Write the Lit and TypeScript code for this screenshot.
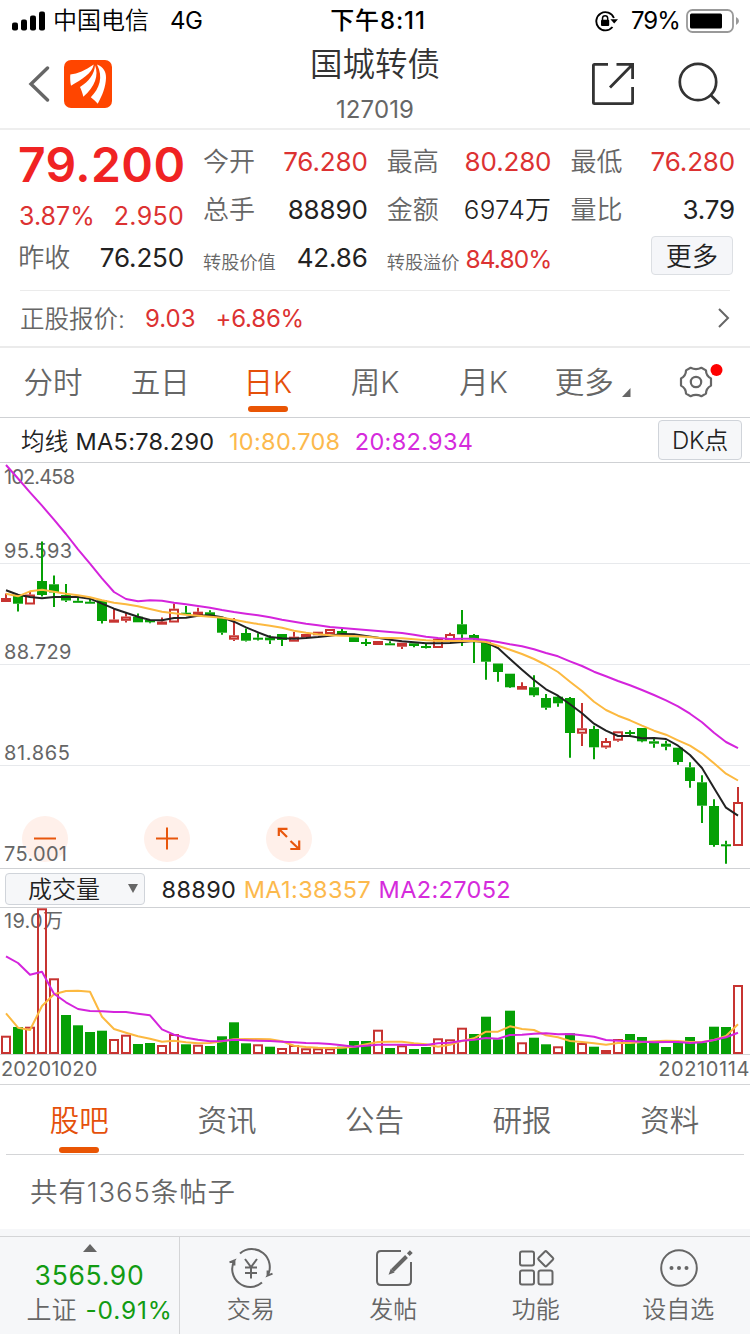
import { LitElement, html, svg, css } from "lit";
import { customElement } from "lit/decorators.js";
import { classMap } from "lit/directives/class-map.js";

const STEP = 12;
const cx = (i: number) => 6 + STEP * i;

// [rising, high, body top, body bottom, low]
type Candle = [number, number, number, number, number];
const CANDLES: Candle[] = [
  [1, 593.5, 598, 602, 602], [0, 594, 594.5, 603.7, 611.5], [1, 591.5, 594.5, 604.5, 604.5],
  [0, 541.5, 581, 595, 596.5], [0, 575.5, 584.3, 592.5, 607], [0, 584, 595, 600.5, 602],
  [0, 596.5, 600.8, 602.8, 602.8], [0, 598.7, 601.7, 603.7, 603.7], [0, 600.3, 600.3, 621, 623.5],
  [1, 609, 619.5, 622.7, 622.7], [1, 612.5, 616.5, 620.8, 622.5], [0, 613.5, 616.7, 622.3, 622.3],
  [0, 620, 620, 622.3, 623.3], [1, 617.5, 621.5, 624.7, 624.7], [1, 603.5, 608.7, 622.5, 622.5],
  [0, 606, 612.7, 614.3, 614.3], [1, 607.7, 611.7, 615.3, 615.3], [0, 610.3, 612.3, 615.3, 615.3],
  [0, 618, 618, 632.7, 634.7], [1, 618, 635.3, 639.7, 641], [0, 628.5, 633, 640.7, 641.5],
  [0, 633.3, 637.7, 639.3, 640.5], [0, 635.3, 637.5, 640.3, 644], [0, 634, 634, 640, 646],
  [1, 632, 636.7, 641.7, 641.7], [1, 634, 634, 637.5, 637.5], [1, 631.7, 631.7, 635.3, 635.3],
  [1, 629, 629, 634, 634], [0, 629, 631, 635.3, 635.3], [0, 637.3, 637.3, 642, 642],
  [0, 638.7, 642, 643.5, 646], [1, 641, 641, 645, 645], [0, 641.3, 643.3, 645, 645],
  [1, 642.7, 642.7, 646.7, 649], [0, 643.3, 643.3, 646, 647.3], [0, 644, 646, 647.7, 648.5],
  [1, 638.7, 638.7, 648, 648], [1, 632.7, 634, 640, 640], [0, 610, 624.3, 634.3, 646],
  [0, 634, 635, 639.3, 663], [0, 641.7, 641.7, 661.7, 679.7], [0, 663.5, 663.5, 672, 681.7],
  [0, 673.7, 673.7, 687.3, 688], [1, 682.3, 686, 689.7, 689.7], [0, 675.3, 687.3, 695.3, 696.7],
  [0, 694, 698, 707.7, 709.7], [0, 695, 696.7, 703.3, 706.7], [0, 697, 698, 733, 757.7],
  [1, 703, 728.3, 733.7, 746], [0, 725.7, 729, 747.3, 759.3], [1, 738, 741, 747.5, 748.7],
  [1, 731.3, 731.3, 740.7, 741.7], [0, 730.3, 732, 733.5, 735.7], [0, 728, 728, 741.3, 742.3],
  [0, 738.7, 741.3, 743.7, 747.7], [0, 740.7, 743.7, 746.7, 750.3], [0, 747.7, 747.7, 762, 764.7],
  [0, 762.3, 767.3, 781, 787.7], [0, 775.3, 782.3, 805.7, 823], [0, 799.3, 806, 845, 846.7],
  [0, 840.7, 844.3, 846, 863.7], [1, 787, 802, 846, 846],
];

const MA5 = [
  590.3, 594.7, 597, 598.3, 597, 597, 597, 598.7, 603.7, 608.7, 612.7, 616.7, 620, 620.3, 618, 617.7,
  615.7, 615.3, 617.3, 621.7, 627.3, 632.3, 637, 638.3, 638.7, 638, 637, 635.7, 634, 634.3, 636,
  637.7, 639.7, 641.3, 642.3, 643.3, 643.3, 643, 642, 641, 642.3, 648, 659, 669.7, 680, 689.3,
  695.7, 704.3, 713.3, 723.7, 730.7, 736, 736, 738.3, 738, 739, 745.7, 755, 768, 788, 807.7, 815.7,
];
const MA10 = [
  593.7, 596.3, 591.3, 589.7, 591.7, 593.7, 595.3, 597.3, 600.3, 602.7, 604.3, 606.3, 609, 611.7,
  613.3, 614.7, 615.7, 616.7, 617.7, 619.7, 622, 624, 625.7, 627.7, 630.7, 632.7, 634.3, 635.3,
  635.7, 636, 636.7, 637.7, 638, 638.3, 639.3, 640.3, 641, 641, 641, 641, 642, 645.7, 649.7, 654,
  659, 665, 672, 681.7, 691, 701.7, 710, 715.7, 720.3, 725.7, 730.7, 734.7, 740.3, 745.7, 753.3,
  763.3, 773.7, 780.5,
];
const MA20 = [
  465, 478.5, 492.3, 505.7, 519.7, 534, 549.3, 563.7, 578.3, 592, 599, 601.3, 600.3, 600.7, 602.7,
  604.3, 606, 607.7, 610, 612, 613.7, 615.3, 617.3, 619.7, 621.7, 623.7, 625.3, 627, 628, 629, 630,
  631, 632, 633, 634.7, 636.7, 638, 639, 638.7, 638.7, 640, 642, 644.3, 646.3, 649.3, 653, 656.3,
  661.3, 666, 671.7, 676.3, 681, 685.3, 690, 695, 700.3, 706.3, 713.7, 722.3, 732.7, 742, 748.2,
];

// [rising, bar top]
const VOLUMES: [number, number][] = [
  [1, 1035.7], [0, 1027], [1, 1026.7], [1, 908.3], [1, 978.3], [0, 1015], [0, 1025.3], [0, 1032],
  [0, 1030.7], [1, 1039], [1, 1034.7], [0, 1044], [0, 1043], [1, 1045], [1, 1034], [0, 1044.3],
  [1, 1044.7], [0, 1046], [0, 1036.3], [0, 1022.3], [0, 1043.3], [1, 1044.3], [0, 1046.7],
  [1, 1048], [1, 1045], [1, 1048.3], [1, 1048.3], [1, 1048.3], [0, 1046.7], [0, 1041], [0, 1041],
  [1, 1029.7], [0, 1048], [1, 1045.3], [0, 1049], [0, 1047], [1, 1038.3], [1, 1039.3], [1, 1027.7],
  [0, 1034], [0, 1016.7], [0, 1039.3], [0, 1010.7], [1, 1042.3], [0, 1037.7], [0, 1044.3],
  [1, 1046.3], [0, 1033.3], [1, 1043], [0, 1046.7], [1, 1050], [1, 1039], [0, 1034], [0, 1037],
  [0, 1042], [0, 1047], [0, 1043], [0, 1037], [0, 1042.3], [0, 1026.7], [0, 1027], [1, 985],
];
const VMA1 = [
  1013.3, 1027.7, 1030, 1006, 994.3, 991, 990.7, 991.7, 1016.7, 1029, 1032.7, 1036.3, 1038.7, 1041.7,
  1040.7, 1042.3, 1043.3, 1043, 1041.3, 1039.3, 1039, 1039, 1039.3, 1041.3, 1045.7, 1047, 1047.7,
  1048, 1047.7, 1046.7, 1044.3, 1042, 1041.7, 1041.7, 1043.3, 1044.3, 1046.7, 1044.7, 1041, 1038.3,
  1031.7, 1031.7, 1026.3, 1029, 1030, 1035.3, 1037.3, 1041, 1042, 1043.3, 1044.7, 1043, 1043, 1042,
  1041.3, 1040.7, 1041, 1042, 1042, 1040, 1036, 1024.3,
];
const VMA2 = [
  956.3, 963, 974.7, 971.7, 993.7, 1002.3, 1009, 1011, 1011.3, 1012, 1012, 1013.7, 1015.3, 1029.3,
  1034.7, 1037.7, 1039.7, 1041.3, 1041, 1039.7, 1040.3, 1040.7, 1041, 1041.7, 1042.3, 1043, 1043.3,
  1044, 1045.3, 1046.7, 1045.7, 1044.7, 1044.7, 1044.7, 1045, 1045, 1043.3, 1042.7, 1040.7, 1039.7,
  1038, 1038.7, 1035, 1034.7, 1033.7, 1033.3, 1034.3, 1034, 1035.3, 1036.7, 1040, 1040.7, 1041,
  1041.7, 1042.3, 1042, 1042, 1043, 1042.3, 1040, 1037.3, 1032.7,
];

const GREEN = "#05a005";
const RED = "#c73431";
const line = (ys: number[]) => ys.map((y, i) => `${cx(i)},${y}`).join(" ");

@customElement("kline-chart")
export class KlineChart extends LitElement {
  static styles = css`
    :host { display: block; height: 405px; }
    svg { display: block; }
    .ma { fill: none; stroke-width: 2; stroke-linejoin: round; }
    text { font: 20px Inter, "Noto Sans CJK SC", sans-serif; fill: #666; }
  `;
  render() {
    return html`<svg width="750" height="405" viewBox="0 463 750 405">
      ${[563.5, 664.5, 765.5].map((y) => svg`<path d="M0 ${y}H750" stroke="#e7e9ec"/>`)}
      ${[45, 167, 289].map((x) => svg`<circle cx=${x} cy="839" r="23" fill="#fff0ea"/>`)}
      <path d="M34 838.5H56M156 838.5H178M167 827.5V849.5" stroke="#e8560c" stroke-width="2" fill="none" />
      <path d="M278.8 836V828.8H287.5M279 829L287 837M290.5 841L299 849M299.2 840.5V849H290.3" stroke="#e8560c" stroke-width="2.2" fill="none" />
      <text x="4" y="483.5" textLength="71">102.458</text>
      <text x="4" y="557.5" textLength="68">95.593</text>
      <text x="4" y="658.5" textLength="67.5">88.729</text>
      <text x="4" y="759.5" textLength="66">81.865</text>
      <text x="4" y="860.5" textLength="63">75.001</text>
      ${CANDLES.map(([up, hi, top, bot, lo], i) => {
        const h = bot - top;
        const color = up ? RED : GREEN;
        return svg`
          <path d="M${cx(i)} ${hi}V${top}M${cx(i)} ${bot}V${lo}" stroke=${color} stroke-width="2"/>
          ${up
            ? svg`<rect x=${cx(i) - 4} y=${top + 1} width="8" height=${Math.max(h - 2, 1)} fill=${h > 4 ? "#fff" : RED} stroke=${RED} stroke-width="2"/>`
            : svg`<rect x=${cx(i) - 5} y=${top} width="10" height=${Math.max(h, 2)} fill=${GREEN}/>`}`;
      })}
      <polyline class="ma" points=${line(MA5)} stroke="#222" />
      <polyline class="ma" points=${line(MA10)} stroke="#fcb940" />
      <polyline class="ma" points=${line(MA20)} stroke="#d424dc" />
    </svg>`;
  }
}

@customElement("volume-chart")
export class VolumeChart extends LitElement {
  static styles = css`
    :host { display: block; height: 147px; }
    svg { display: block; }
    .ma { fill: none; stroke-width: 2; stroke-linejoin: round; }
    text { font: 20px Inter, "Noto Sans CJK SC", sans-serif; fill: #666; }
  `;
  render() {
    return html`<svg width="750" height="147" viewBox="0 908 750 147">
      <path d="M0 1054.5H750" stroke="#d4d4d6" />
      <text x="4" y="928" textLength="59">19.0万</text>
      ${VOLUMES.map(([up, top], i) =>
        up
          ? svg`<rect x=${cx(i) - 4} y=${top + 1} width="8" height=${1052 - top} fill="none" stroke=${RED} stroke-width="2"/>`
          : svg`<rect x=${cx(i) - 5} y=${top} width="10" height=${1054 - top} fill=${GREEN}/>`
      )}
      <polyline class="ma" points=${line(VMA1)} stroke="#fcb940" />
      <polyline class="ma" points=${line(VMA2)} stroke="#d424dc" />
    </svg>`;
  }
}

@customElement("app-root")
export class AppRoot extends LitElement {
  static styles = css`
    :host {
      display: flex; flex-direction: column; width: 750px; height: 1334px; overflow: hidden;
      background: #fff; color: #222;
      font-family: Inter, "Noto Sans CJK SC", sans-serif; font-size: 26px; white-space: nowrap;
    }
    * { box-sizing: border-box; }
    svg { display: block; flex: none; }
    .red { color: #dc3232; }
    .yellow { color: #fcb94d; }
    .magenta { color: #d52bdc; }
    .green { color: #129b12; }

    .status { height: 40px; display: grid; grid-template-columns: 1fr auto 1fr; align-items: center; line-height: 40px; font-size: 24px; color: #000; padding: 1px 11px 0 12px; }
    .status .side { display: flex; align-items: center; }
    .status .right { justify-content: flex-end; }
    .bars { margin-bottom: 1px; }
    .carrier { margin-left: 8px; font-weight: 350; }
    .net { margin-left: 21px; letter-spacing: -0.6px; }
    .clock { font-weight: 500; font-size: 24px; letter-spacing: 0.9px; padding-left: 5px; }
    .pct { margin: 0 6px 0 13px; letter-spacing: -0.9px; }

    .header { height: 90px; border-bottom: 2px solid #eee; display: grid; grid-template-columns: 1fr auto 1fr; padding: 0 28px; }
    .header .left { display: flex; align-items: center; gap: 14px; }
    .header .tools { display: flex; align-items: center; justify-content: flex-end; gap: 40px; }
    .title { text-align: center; }
    .name { font-size: 32.5px; line-height: 50px; color: #333; font-weight: 350; }
    .code { font-size: 24px; line-height: 39px; color: #666; letter-spacing: 0.1px; margin-bottom: -1px; }

    .quote { height: 160px; display: grid; grid-template-columns: 165px 164px 164px 164px; column-gap: 19.7px; padding: 8px 0 0 19px; }
    .col { display: flex; flex-direction: column; }
    .cell { height: 48px; display: flex; justify-content: space-between; align-items: center; line-height: 48px; letter-spacing: -0.15px; }
    .label { color: #666; font-weight: 350; margin-left: -0.7px; letter-spacing: 0; }
    .label.small { font-size: 18.2px; padding-top: 7px; }
    .wan { font-weight: 350; letter-spacing: 0.3px; }
    .rate { font-size: 24.5px; letter-spacing: -0.9px; padding-top: 1px; }
    .price { height: 60px; line-height: 54px; font-size: 48px; font-weight: 600; color: #f02323; letter-spacing: 0.4px; margin-left: -1px; }
    .change { height: 35px; line-height: 37px; display: flex; justify-content: space-between; letter-spacing: 0; font-size: 25px; }
    .change .diff { letter-spacing: 0.3px; }
    .change + .cell { margin-top: 1px; }
    .cell.end { justify-content: flex-end; }
    .more { width: 82px; height: 39px; margin: 0 2px 6px 0; border: 1px solid #dcdfe3; border-radius: 4px; background: #f5f6f9; line-height: 39px; text-align: center; letter-spacing: 0.3px; font-weight: 350; }

    .stock { height: 58px; border-bottom: 2px solid #ebebeb; padding: 0 20px; }
    .stock-in { height: 56px; border-top: 1px solid #ebebeb; display: flex; align-items: center; line-height: 54px; font-size: 24px; padding-top: 1px; }
    .stock .label { font-size: 24.5px; margin-left: 0; width: 106px; }
    .stock .a { margin-left: 19px; }
    .stock .b { margin-left: 20px; flex: 1; letter-spacing: -0.2px; }

    .periods { height: 70px; border-bottom: 1px solid #cfd1d4; display: grid; grid-template-columns: repeat(7, 1fr); }
    .period { position: relative; display: flex; flex-direction: column; align-items: center; font-size: 29.5px; line-height: 69px; color: #666; font-weight: 350; }
    .period:nth-child(-n + 2) { padding-right: 1px; }
    .period:nth-child(5) { padding-left: 3px; }
    .period:nth-child(6) { padding-left: 7px; }
    .active { color: #e5500a; }
    .bar { position: absolute; bottom: 5px; width: 40px; height: 6px; border-radius: 3px; background: #e95504; }
    .period .wide { display: flex; align-items: flex-end; gap: 8px; }
    .period .wide svg { margin-bottom: 20px; }
    .gear { margin-top: 15px; }

    .ma-row { height: 45px; border-bottom: 1px solid #cfd1d4; display: flex; align-items: center; font-size: 23.5px; line-height: 42px; padding: 0 8px 0 21px; letter-spacing: 0.3px; }
    .ma-row .m { margin-right: 14.5px; padding-top: 3px; }
    .zh { font-weight: 350; }
    .dk { margin-left: auto; width: 84px; height: 40px; border: 1px solid #d0d4da; border-radius: 4px; background: #f6f7f9; text-align: center; line-height: 40px; font-size: 24px; letter-spacing: -0.3px; font-weight: 350; }

    .vol-row { height: 40px; border-top: 1px solid #cfd1d4; border-bottom: 1px solid #cfd1d4; display: flex; align-items: center; font-size: 23.5px; line-height: 36px; padding-left: 5px; letter-spacing: 0.35px; }
    .select { width: 140px; height: 32px; border: 1px solid #d0d4da; border-radius: 4px; background: #f6f7f9; display: flex; align-items: center; justify-content: space-between; padding: 0 6px 0 22px; line-height: 26px; font-size: 24px; letter-spacing: 0; margin: 1px 16.5px 0 0; font-weight: 350; }
    .select span { padding-top: 3px; }
    .vol-row .m { margin-right: 7.5px; padding-top: 3px; }

    .dates { height: 30px; border-bottom: 1px solid #d4d5d7; display: flex; justify-content: space-between; font-size: 20px; line-height: 28px; color: #666; padding: 0 0 0 1px; letter-spacing: 0.15px; }
    .dates .to { letter-spacing: 0.6px; }

    .tabs { height: 70px; margin: 0 6px; border-bottom: 1px solid #d4d5d7; display: grid; grid-template-columns: repeat(5, 1fr); }
    .tab { position: relative; display: flex; justify-content: center; font-size: 29.5px; line-height: 71px; color: #666; font-weight: 350; padding-right: 1px; }
    .tab .bar { bottom: 3px; }
    .tab.active { color: #e5500a; }
    .posts { height: 74px; padding-left: 30px; line-height: 74px; font-size: 27.5px; letter-spacing: 0.9px; color: #666; font-weight: 350; }

    .footer { height: 105px; background: #f6f7f9; padding-top: 7px; }
    .foot-in { height: 98px; border-top: 1px solid #d4d5d7; display: grid; grid-template-columns: 180px repeat(4, 142.5px); }
    .index { border-right: 1px solid #d4d5d7; display: flex; flex-direction: column; align-items: center; }
    .index .arrow { margin-top: 7px; }
    .idx { font-size: 26.5px; line-height: 36px; margin-top: 5px; letter-spacing: 0.7px; }
    .idx2 { font-size: 24.5px; line-height: 34px; padding-left: 20px; letter-spacing: 0.8px; }
    .idx2 .zh { color: #666; font-size: 25px; margin-right: 9px; letter-spacing: 0; }
    .act { display: flex; flex-direction: column; align-items: center; color: #666; font-weight: 350; font-size: 24px; line-height: 36px; gap: 4px; padding: 11px 1px 0 0; }
    .act svg { margin-left: 1px; }
  `;

  private cell(label: string, value: string, tone = "", small = false) {
    return html`<div class="cell">
      <span class=${classMap({ label: true, small })}>${label}</span><span class=${tone}>${value}</span>
    </div>`;
  }

  render() {
    return html`
      <div class="status">
        <div class="side">
          <svg class="bars" width="33" height="20" viewBox="0 0 33 20">
            <rect x="0" y="11.5" width="6" height="8" rx="2" /><rect x="9" y="8.5" width="6" height="11" rx="2" />
            <rect x="18" y="4.5" width="6" height="15" rx="2" /><rect x="27" y="0.5" width="6" height="19" rx="2" />
          </svg>
          <span class="carrier">中国电信</span><span class="net">4G</span>
        </div>
        <span class="clock">下午8:11</span>
        <div class="side right">
          <svg width="23" height="22" viewBox="0 0 23 22">
            <path d="M18.9 8A9.1 9.1 0 1 0 17.5 17" fill="none" stroke="#000" stroke-width="1.9" />
            <path d="M15.4 9.2H23L19.2 13.6Z" /><rect x="6" y="9.7" width="8.2" height="6.3" rx="1" />
            <path d="M7.5 10V8.3a2.6 2.6 0 0 1 5.2 0V10" fill="none" stroke="#000" stroke-width="1.5" />
          </svg>
          <span class="pct">79%</span>
          <svg width="53" height="24" viewBox="0 0 53 24">
            <rect x="1" y="1" width="46" height="22" rx="5.5" fill="none" stroke="#999" stroke-width="1.8" />
            <rect x="4" y="4.5" width="32" height="15" rx="1.5" /><path d="M50 8Q53 9.5 53 12T50 16Z" fill="#999" />
          </svg>
        </div>
      </div>

      <div class="header">
        <div class="left">
          <svg width="22" height="36" viewBox="0 0 22 36"><path d="M19.5 2L3 18L19.5 34" fill="none" stroke="#666" stroke-width="3.4" stroke-linecap="round" /></svg>
          <svg width="48" height="48" viewBox="0 0 48 48">
            <rect width="48" height="48" rx="7" fill="#ff4500" />
            <g fill="#fff">
              <path d="M6.3 14.5C14 14 21 10.5 29.8 4.6C28 13.5 18 19.5 7 25.8C6.2 22 6 18 6.3 14.5Z" />
              <path d="M31 5.3C35 15 31 27 19.3 36.7C18.7 33.3 17.3 30 16 27C25 21.5 30.5 14 31 5.3Z" />
              <path d="M33 4.5C39.5 7 42.3 12 42 18C41.7 27 38.5 35 33.7 43.8C31.8 41.5 29 39 26.8 37.3C35.5 28.5 39.5 17 33 4.5Z" />
            </g>
          </svg>
        </div>
        <div class="title"><div class="name">国城转债</div><div class="code">127019</div></div>
        <div class="tools">
          <svg width="46" height="46" viewBox="0 0 46 46" fill="none" stroke="#333" stroke-width="2.8">
            <path d="M18 3.4H4.5Q3.4 3.4 3.4 4.5V41.5Q3.4 42.6 4.5 42.6H41.5Q42.6 42.6 42.6 41.5V26M26.5 3.4H42.6V18M42 4L20 26.5" />
          </svg>
          <svg width="46" height="46" viewBox="0 0 46 46" fill="none" stroke="#333" stroke-width="2.7">
            <circle cx="22" cy="21" r="18.2" /><path d="M34.6 34L43.4 42.7" />
          </svg>
        </div>
      </div>

      <div class="quote">
        <div class="col">
          <div class="price">79.200</div>
          <div class="change red"><span>3.87%</span><span class="diff">2.950</span></div>
          ${this.cell("昨收", "76.250")}
        </div>
        <div class="col">${this.cell("今开", "76.280", "red")}${this.cell("总手", "88890")}${this.cell("转股价值", "42.86", "", true)}</div>
        <div class="col">${this.cell("最高", "80.280", "red")}${this.cell("金额", "6974万", "wan")}${this.cell("转股溢价", "84.80%", "red rate", true)}</div>
        <div class="col">${this.cell("最低", "76.280", "red")}${this.cell("量比", "3.79")}<div class="cell end"><div class="more">更多</div></div></div>
      </div>

      <div class="stock">
        <div class="stock-in">
          <span class="label">正股报价:</span><span class="a red">9.03</span><span class="b red">+6.86%</span>
          <svg width="12" height="22" viewBox="0 0 12 22"><path d="M1 1L10 10L1 19" fill="none" stroke="#666" stroke-width="2" /></svg>
        </div>
      </div>

      <div class="periods">
        <div class="period">分时</div><div class="period">五日</div>
        <div class="period active">日K<i class="bar"></i></div>
        <div class="period">周K</div><div class="period">月K</div>
        <div class="period"><div class="wide">更多<svg width="9" height="9"><path d="M8.5 0V9H0Z" fill="#666" /></svg></div></div>
        <div class="period">
          <svg class="gear" width="54" height="38" viewBox="-5 0 54 38">
            <path d="M16.6 4.8Q22 7.4 27.4 4.8L32 7.4Q32 12.6 37 15.4V22.6Q32 25.4 32 30.6L27.4 33.2Q22 30.6 16.6 33.2L12 30.6Q12 25.4 7 22.6V15.4Q12 12.6 12 7.4Z" fill="none" stroke="#666" stroke-width="2.2" stroke-linejoin="round" />
            <circle cx="22" cy="19" r="5.2" fill="none" stroke="#666" stroke-width="2.2" /><circle cx="42.5" cy="7" r="6" fill="#fe0000" />
          </svg>
        </div>
      </div>

      <div class="ma-row">
        <span class="m"><span class="zh">均线</span> MA5:78.290</span><span class="m yellow">10:80.708</span><span class="m magenta">20:82.934</span>
        <div class="dk">DK点</div>
      </div>
      <kline-chart></kline-chart>
      <div class="vol-row">
        <div class="select"><span>成交量</span><svg width="10" height="9"><path d="M0 0H10L5 9Z" fill="#666" /></svg></div>
        <span class="m">88890</span><span class="m yellow">MA1:38357</span><span class="m magenta">MA2:27052</span>
      </div>
      <volume-chart></volume-chart>
      <div class="dates"><span>20201020</span><span class="to">20210114</span></div>

      <div class="tabs">
        <div class="tab active">股吧<i class="bar"></i></div>
        ${["资讯", "公告", "研报", "资料"].map((t) => html`<div class="tab">${t}</div>`)}
      </div>
      <div class="posts">共有1365条帖子</div>

      <div class="footer">
        <div class="foot-in">
          <div class="index">
            <svg class="arrow" width="14" height="8"><path d="M7 0L14 8H0Z" fill="#666" /></svg>
            <div class="idx green">3565.90</div>
            <div class="idx2 green"><span class="zh">上证</span>-0.91%</div>
          </div>
          <div class="act">
            <svg width="44" height="40" viewBox="0 0 44 40" fill="none" stroke="#666" stroke-width="2">
              <path d="M11 5.4A18 18 0 0 1 38.6 27.6L43.5 25.6M38.6 28.5V22.5M33 34.6A18 18 0 0 1 5.4 12.4L0.5 14.4M5.4 11.5V17.5M16 11L22 19L28 11M22 19V30.5M16 19.5H28M16 25H28" />
            </svg>交易
          </div>
          <div class="act">
            <svg width="40" height="40" viewBox="0 0 40 40" fill="none" stroke="#666" stroke-width="2">
              <path d="M27 3H7Q3 3 3 7V33Q3 37 7 37H33Q37 37 37 33V14" />
              <path d="M18.5 22.5L32.5 8.5M34.3 6.7L37.3 3.7" stroke-width="4" /><path d="M14.5 26.8L16.8 20.8L20.6 24.4Z" fill="#666" stroke="none" />
            </svg>发帖
          </div>
          <div class="act">
            <svg width="40" height="40" viewBox="0 0 40 40" fill="none" stroke="#666" stroke-width="2">
              <rect x="4" y="3.5" width="14" height="14" rx="2" /><rect x="4" y="22.5" width="14" height="14" rx="2" />
              <rect x="22.5" y="22.5" width="14" height="14" rx="2" />
              <rect x="24" y="5" width="11.5" height="11.5" rx="1.5" transform="rotate(45 29.75 10.75)" />
            </svg>功能
          </div>
          <div class="act">
            <svg width="40" height="40" viewBox="0 0 40 40" fill="none" stroke="#666" stroke-width="2">
              <circle cx="20" cy="20" r="17.8" />
              <g fill="#666" stroke="none"><circle cx="12.5" cy="20" r="2" /><circle cx="20" cy="20" r="2" /><circle cx="27.5" cy="20" r="2" /></g>
            </svg>设自选
          </div>
        </div>
      </div>
    `;
  }
}
